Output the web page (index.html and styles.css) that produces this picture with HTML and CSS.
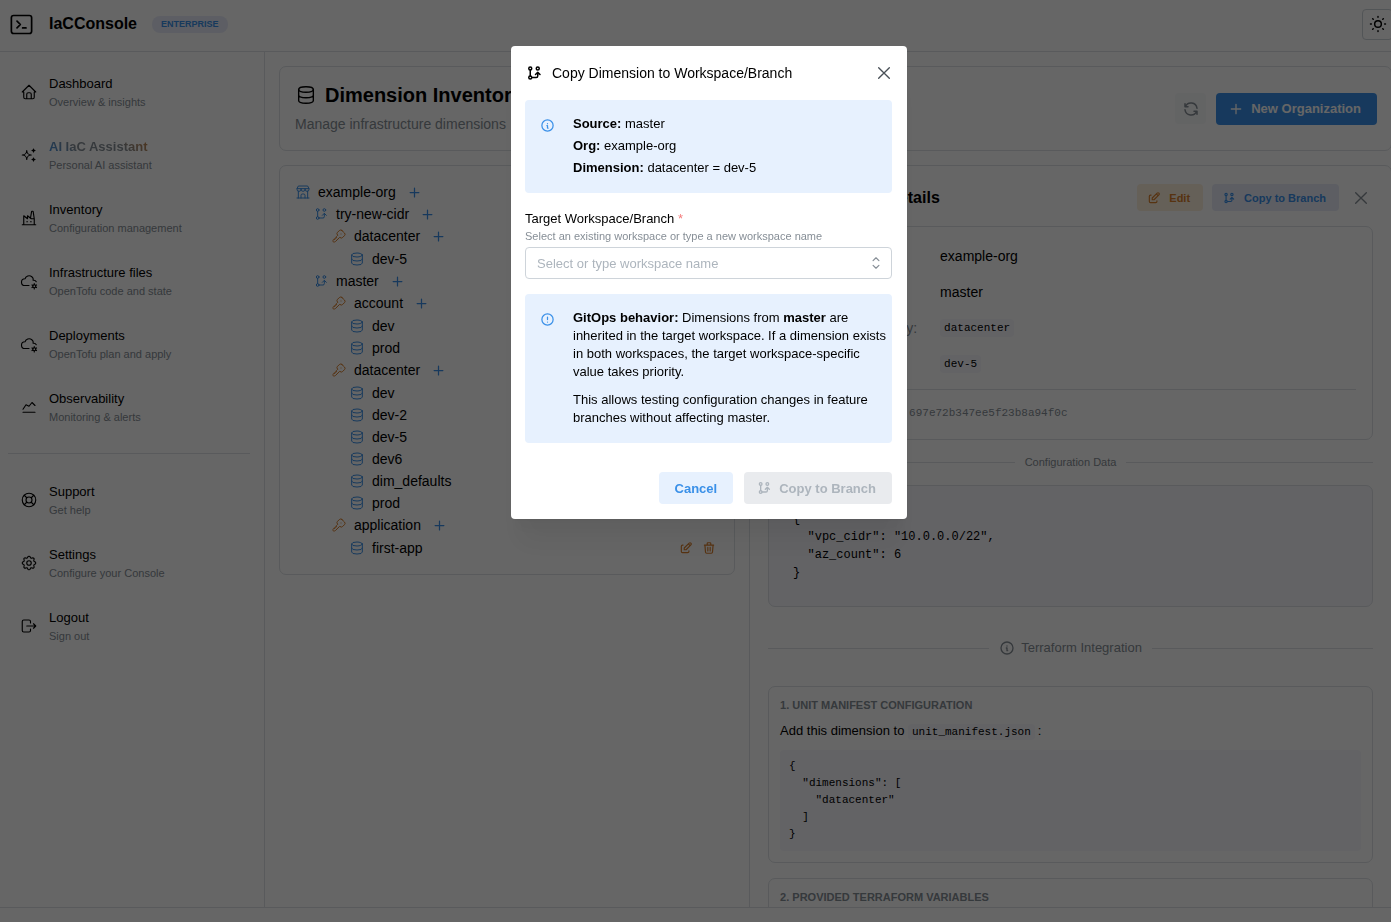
FILE: index.html
```
<!DOCTYPE html>
<html lang="en">
<head>
<meta charset="UTF-8">
<meta name="viewport" content="width=device-width, initial-scale=1">
<title>IaCConsole - Dimension Inventory</title>
<link rel="stylesheet" href="styles.css">
</head>
<body>
<svg class="sprite" aria-hidden="true">
	<symbol id="i-terminal" viewBox="0 0 24 24"><rect x="3" y="4" width="18" height="16" rx="2"/><path d="M8 9l3 3l-3 3M13 15h3"/></symbol>
	<symbol id="i-home" viewBox="0 0 24 24"><path d="M5 12H3l9-9l9 9h-2M5 12v7a2 2 0 0 0 2 2h10a2 2 0 0 0 2-2v-7M9 21v-6a2 2 0 0 1 2-2h2a2 2 0 0 1 2 2v6"/></symbol>
	<symbol id="i-sparkles" viewBox="0 0 24 24"><path d="M16 18a2 2 0 0 1 2 2a2 2 0 0 1 2-2a2 2 0 0 1-2-2a2 2 0 0 1-2 2zM16 6a2 2 0 0 1 2 2a2 2 0 0 1 2-2a2 2 0 0 1-2-2a2 2 0 0 1-2 2zM9 18a6 6 0 0 1 6-6a6 6 0 0 1-6-6a6 6 0 0 1-6 6a6 6 0 0 1 6 6z"/></symbol>
	<symbol id="i-factory" viewBox="0 0 24 24"><path d="M3 21h18M5 21V9l5 4V9l5 4h4M19 21v-8l-1.436-9.574A.5.5 0 0 0 17.069 3h-1.145a.5.5 0 0 0-.494.418L14 12M9 17h1M14 17h1"/></symbol>
	<symbol id="i-cloud" viewBox="0 0 24 24"><path d="M12 18H6.657C4.085 17.996 2 15.989 2 13.513c0-2.475 2.085-4.482 4.657-4.482c.393-1.762 1.794-3.2 3.675-3.773c1.88-.572 3.956-.193 5.444 1c1.488 1.19 2.162 3.007 1.77 4.769h.99c1.37 0 2.556.8 3.117 1.964"/><circle cx="19" cy="19" r="2"/><path d="M19 15.5V17M19 21v1.5M22.032 17.25l-1.299.75M17.27 20l-1.3.75M15.97 17.25l1.3.75M20.733 20l1.3.75"/></symbol>
	<symbol id="i-chart" viewBox="0 0 24 24"><path d="M4 19h16M4 15l4-6l4 2l4-5l4 4"/></symbol>
	<symbol id="i-lifebuoy" viewBox="0 0 24 24"><circle cx="12" cy="12" r="4"/><circle cx="12" cy="12" r="9"/><path d="M15 15l3.35 3.35M9 15l-3.35 3.35M5.65 5.65L9 9M18.35 5.65L15 9"/></symbol>
	<symbol id="i-settings" viewBox="0 0 24 24"><path d="M10.325 4.317c.426-1.756 2.924-1.756 3.35 0a1.724 1.724 0 0 0 2.573 1.066c1.543-.94 3.31.826 2.37 2.37a1.724 1.724 0 0 0 1.065 2.572c1.756.426 1.756 2.924 0 3.35a1.724 1.724 0 0 0-1.066 2.573c.94 1.543-.826 3.31-2.37 2.37a1.724 1.724 0 0 0-2.572 1.065c-.426 1.756-2.924 1.756-3.35 0a1.724 1.724 0 0 0-2.573-1.066c-1.543.94-3.31-.826-2.37-2.37a1.724 1.724 0 0 0-1.065-2.572c-1.756-.426-1.756-2.924 0-3.35a1.724 1.724 0 0 0 1.066-2.573c-.94-1.543.826-3.31 2.37-2.37c1 .608 2.296.07 2.572-1.065z"/><circle cx="12" cy="12" r="3"/></symbol>
	<symbol id="i-logout" viewBox="0 0 24 24"><path d="M14 8V6a2 2 0 0 0-2-2H5a2 2 0 0 0-2 2v12a2 2 0 0 0 2 2h7a2 2 0 0 0 2-2v-2M9 12h12l-3-3M18 15l3-3"/></symbol>
	<symbol id="i-database" viewBox="0 0 24 24"><ellipse cx="12" cy="6" rx="8" ry="3"/><path d="M4 6v6a8 3 0 0 0 16 0V6M4 12v6a8 3 0 0 0 16 0v-6"/></symbol>
	<symbol id="i-store" viewBox="0 0 24 24"><path d="M3 21h18M3 7v1a3 3 0 0 0 6 0V7M9 8a3 3 0 0 0 6 0V7M15 8a3 3 0 0 0 6 0V7H3l2-4h14l2 4M5 21V10.85M19 21V10.85M9 21v-4a2 2 0 0 1 2-2h2a2 2 0 0 1 2 2v4"/></symbol>
	<symbol id="i-branch" viewBox="0 0 24 24"><circle cx="7" cy="18" r="2"/><circle cx="7" cy="6" r="2"/><circle cx="17" cy="6" r="2"/><path d="M7 8v8M9 18h6a2 2 0 0 0 2-2v-5M14 14l3-3l3 3"/></symbol>
	<symbol id="i-key" viewBox="0 0 24 24"><path d="M16.555 3.843l3.602 3.602a2.877 2.877 0 0 1 0 4.069l-2.643 2.643a2.877 2.877 0 0 1-4.069 0l-.301-.301l-6.558 6.558a2 2 0 0 1-1.239.578L5.172 21H4a1 1 0 0 1-.993-.883L3 20v-1.172a2 2 0 0 1 .467-1.284l.119-.13L4 17h2v-2h2v-2l2.144-2.144l-.301-.301a2.877 2.877 0 0 1 0-4.069l2.643-2.643a2.877 2.877 0 0 1 4.069 0zM15 9h.01"/></symbol>
	<symbol id="i-plus" viewBox="0 0 24 24"><path d="M12 5v14M5 12h14"/></symbol>
	<symbol id="i-edit" viewBox="0 0 24 24"><path d="M7 7H6a2 2 0 0 0-2 2v9a2 2 0 0 0 2 2h9a2 2 0 0 0 2-2v-1M20.385 6.585a2.1 2.1 0 0 0-2.97-2.97L9 12v3h3zM16 5l3 3"/></symbol>
	<symbol id="i-trash" viewBox="0 0 24 24"><path d="M4 7h16M10 11v6M14 11v6M5 7l1 12a2 2 0 0 0 2 2h8a2 2 0 0 0 2-2l1-12M9 7V4a1 1 0 0 1 1-1h4a1 1 0 0 1 1 1v3"/></symbol>
	<symbol id="i-sun" viewBox="0 0 24 24"><circle cx="12" cy="12" r="4"/><path d="M3 12h1M12 3v1M20 12h1M12 20v1M5.6 5.6l.7.7M18.4 5.6l-.7.7M17.7 17.7l.7.7M6.3 17.7l-.7.7"/></symbol>
	<symbol id="i-refresh" viewBox="0 0 24 24"><path d="M20 11A8.1 8.1 0 0 0 4.5 9M4 5v4h4M4 13a8.1 8.1 0 0 0 15.5 2M20 19v-4h-4"/></symbol>
	<symbol id="i-info" viewBox="0 0 24 24"><circle cx="12" cy="12" r="9"/><path d="M12 9h.01M11 12h1v4h1"/></symbol>
	<symbol id="i-alert" viewBox="0 0 24 24"><circle cx="12" cy="12" r="9"/><path d="M12 8v4M12 16h.01"/></symbol>
	<symbol id="i-close" viewBox="0 0 24 24"><path d="M4 4l16 16M20 4L4 20"/></symbol>
	<symbol id="i-selector" viewBox="0 0 24 24"><path d="M7 8l5-5l5 5M17 16l-5 5l-5-5"/></symbol>
</svg>

<div class="app">
	<header class="header">
		<svg class="icon logo"><use href="#i-terminal"/></svg>
		<span class="brand">IaCConsole</span>
		<span class="badge">ENTERPRISE</span>
		<button type="button" class="theme-btn" aria-label="Toggle color scheme"><svg class="icon"><use href="#i-sun"/></svg></button>
	</header>

	<div class="shell">
		<nav class="navbar">
			<a class="nav-link" href="#"><svg class="icon"><use href="#i-home"/></svg><span class="nav-body"><span class="nav-label">Dashboard</span><span class="nav-desc">Overview &amp; insights</span></span></a>
			<a class="nav-link" href="#"><svg class="icon"><use href="#i-sparkles"/></svg><span class="nav-body"><span class="nav-label ai">AI IaC Assistant</span><span class="nav-desc">Personal AI assistant</span></span></a>
			<a class="nav-link" href="#"><svg class="icon"><use href="#i-factory"/></svg><span class="nav-body"><span class="nav-label">Inventory</span><span class="nav-desc">Configuration management</span></span></a>
			<a class="nav-link" href="#"><svg class="icon"><use href="#i-cloud"/></svg><span class="nav-body"><span class="nav-label">Infrastructure files</span><span class="nav-desc">OpenTofu code and state</span></span></a>
			<a class="nav-link" href="#"><svg class="icon"><use href="#i-cloud"/></svg><span class="nav-body"><span class="nav-label">Deployments</span><span class="nav-desc">OpenTofu plan and apply</span></span></a>
			<a class="nav-link" href="#"><svg class="icon"><use href="#i-chart"/></svg><span class="nav-body"><span class="nav-label">Observability</span><span class="nav-desc">Monitoring &amp; alerts</span></span></a>
			<hr class="nav-divider">
			<a class="nav-link" href="#"><svg class="icon"><use href="#i-lifebuoy"/></svg><span class="nav-body"><span class="nav-label">Support</span><span class="nav-desc">Get help</span></span></a>
			<a class="nav-link" href="#"><svg class="icon"><use href="#i-settings"/></svg><span class="nav-body"><span class="nav-label">Settings</span><span class="nav-desc">Configure your Console</span></span></a>
			<a class="nav-link" href="#"><svg class="icon"><use href="#i-logout"/></svg><span class="nav-body"><span class="nav-label">Logout</span><span class="nav-desc">Sign out</span></span></a>
		</nav>

		<main class="main">
			<section class="card page-head">
				<div class="page-title">
					<h1><svg class="icon"><use href="#i-database"/></svg>Dimension Inventory</h1>
					<p class="subtitle">Manage infrastructure dimensions</p>
				</div>
				<div class="actions">
					<button type="button" class="refresh-btn" aria-label="Refresh"><svg class="icon"><use href="#i-refresh"/></svg></button>
					<button type="button" class="btn btn-primary"><svg class="icon"><use href="#i-plus"/></svg>New Organization</button>
				</div>
			</section>

			<div class="columns">
				<section class="card tree-card">
					<ul class="tree">
						<li><div class="node"><svg class="icon"><use href="#i-store"/></svg>example-org<button type="button" class="add" aria-label="Add workspace"><svg class="icon"><use href="#i-plus"/></svg></button></div>
							<ul>
								<li><div class="node branch"><svg class="icon"><use href="#i-branch"/></svg>try-new-cidr<button type="button" class="add" aria-label="Add key"><svg class="icon"><use href="#i-plus"/></svg></button></div>
									<ul>
										<li><div class="node key"><svg class="icon"><use href="#i-key"/></svg>datacenter<button type="button" class="add" aria-label="Add value"><svg class="icon"><use href="#i-plus"/></svg></button></div>
											<ul class="values">
												<li class="node"><svg class="icon"><use href="#i-database"/></svg>dev-5</li>
											</ul>
										</li>
									</ul>
								</li>
								<li><div class="node branch"><svg class="icon"><use href="#i-branch"/></svg>master<button type="button" class="add" aria-label="Add key"><svg class="icon"><use href="#i-plus"/></svg></button></div>
									<ul>
										<li><div class="node key"><svg class="icon"><use href="#i-key"/></svg>account<button type="button" class="add" aria-label="Add value"><svg class="icon"><use href="#i-plus"/></svg></button></div>
											<ul class="values">
												<li class="node"><svg class="icon"><use href="#i-database"/></svg>dev</li>
												<li class="node"><svg class="icon"><use href="#i-database"/></svg>prod</li>
											</ul>
										</li>
										<li><div class="node key"><svg class="icon"><use href="#i-key"/></svg>datacenter<button type="button" class="add" aria-label="Add value"><svg class="icon"><use href="#i-plus"/></svg></button></div>
											<ul class="values">
												<li class="node"><svg class="icon"><use href="#i-database"/></svg>dev</li>
												<li class="node"><svg class="icon"><use href="#i-database"/></svg>dev-2</li>
												<li class="node"><svg class="icon"><use href="#i-database"/></svg>dev-5</li>
												<li class="node"><svg class="icon"><use href="#i-database"/></svg>dev6</li>
												<li class="node"><svg class="icon"><use href="#i-database"/></svg>dim_defaults</li>
												<li class="node"><svg class="icon"><use href="#i-database"/></svg>prod</li>
											</ul>
										</li>
										<li><div class="node key"><svg class="icon"><use href="#i-key"/></svg>application<button type="button" class="add" aria-label="Add value"><svg class="icon"><use href="#i-plus"/></svg></button></div>
											<ul class="values">
												<li class="node"><svg class="icon"><use href="#i-database"/></svg>first-app
													<span class="node-actions">
														<button type="button" aria-label="Edit first-app"><svg class="icon"><use href="#i-edit"/></svg></button>
														<button type="button" aria-label="Delete first-app"><svg class="icon"><use href="#i-trash"/></svg></button>
													</span>
												</li>
											</ul>
										</li>
									</ul>
								</li>
							</ul>
						</li>
					</ul>
				</section>

				<section class="card detail-card">
					<div class="detail-head">
						<h2><svg class="icon"><use href="#i-database"/></svg>Dimension Details</h2>
						<button type="button" class="btn btn-xs btn-orange"><svg class="icon"><use href="#i-edit"/></svg>Edit</button>
						<button type="button" class="btn btn-xs btn-light"><svg class="icon"><use href="#i-branch"/></svg>Copy to Branch</button>
						<button type="button" class="close-btn" aria-label="Close details"><svg class="icon"><use href="#i-close"/></svg></button>
					</div>

					<div class="box info-box">
						<dl class="info">
							<dt><svg class="icon"><use href="#i-store"/></svg>Organization:</dt><dd>example-org</dd>
							<dt><svg class="icon"><use href="#i-branch"/></svg>Workspace:</dt><dd>master</dd>
							<dt><svg class="icon"><use href="#i-key"/></svg>Dimension Key:</dt><dd><code>datacenter</code></dd>
							<dt><svg class="icon"><use href="#i-database"/></svg>Value:</dt><dd><code>dev-5</code></dd>
						</dl>
						<p class="dim-id"><span>Dimension ID:</span>697e72b347ee5f23b8a94f0c</p>
					</div>

					<div class="divider">Configuration Data</div>
<pre class="box json">{
  "vpc_cidr": "10.0.0.0/22",
  "az_count": 6
}</pre>

					<div class="divider divider-lg"><span><svg class="icon"><use href="#i-info"/></svg>Terraform Integration</span></div>

					<div class="box step">
						<h3>1. UNIT MANIFEST CONFIGURATION</h3>
						<p>Add this dimension to <code>unit_manifest.json</code>:</p>
<pre class="snippet">{
  "dimensions": [
    "datacenter"
  ]
}</pre>
					</div>
					<div class="box step">
						<h3>2. PROVIDED TERRAFORM VARIABLES</h3>
					</div>
				</section>
			</div>
		</main>
	</div>
	<footer class="footer"></footer>
</div>

<div class="overlay">
	<div class="modal" role="dialog" aria-modal="true" aria-labelledby="modal-title">
		<div class="modal-head">
			<svg class="icon"><use href="#i-branch"/></svg>
			<h2 id="modal-title">Copy Dimension to Workspace/Branch</h2>
			<button type="button" class="close-btn" aria-label="Close"><svg class="icon"><use href="#i-close"/></svg></button>
		</div>
		<div class="alert alert-source">
			<svg class="icon"><use href="#i-info"/></svg>
			<div>
				<p><b>Source:</b> master</p>
				<p><b>Org:</b> example-org</p>
				<p><b>Dimension:</b> datacenter = dev-5</p>
			</div>
		</div>
		<div class="field">
			<label for="target">Target Workspace/Branch <span class="required">*</span></label>
			<p class="field-desc" id="target-desc">Select an existing workspace or type a new workspace name</p>
			<div class="select">
				<input type="text" id="target" placeholder="Select or type workspace name" aria-describedby="target-desc">
				<svg class="icon"><use href="#i-selector"/></svg>
			</div>
		</div>
		<div class="alert">
			<svg class="icon"><use href="#i-alert"/></svg>
			<div>
				<p><b>GitOps behavior:</b> Dimensions from <b>master</b> are inherited in the target workspace. If a dimension exists in both workspaces, the target workspace-specific value takes priority.</p>
				<p>This allows testing configuration changes in feature branches without affecting master.</p>
			</div>
		</div>
		<div class="modal-foot">
			<button type="button" class="btn btn-light">Cancel</button>
			<button type="button" class="btn btn-disabled" disabled><svg class="icon"><use href="#i-branch"/></svg>Copy to Branch</button>
		</div>
	</div>
</div>
</body>
</html>
```

FILE: styles.css
```
:root{
	--blue:#3a90e8;
	--orange:#d97f2c;
	--dimmed:#868e96;
	--border:#dee2e6;
	--tint:#f7f7fd;
	--mono:"Liberation Mono", monospace;
}
*{
	box-sizing:border-box;
}
body{
	margin:0;
	font-family:"Liberation Sans", Arial, sans-serif;
	font-size:13px;
	line-height:18px;
	color:#000;
	background:#fff;
}
h1, h2, h3, p, ul, dl, dd, pre{
	margin:0;
	padding:0;
}
ul{
	list-style:none;
}
button{
	font-family:inherit;
	padding:0;
	border:0;
	background:none;
	color:inherit;
	cursor:pointer;
}
a{
	color:inherit;
	text-decoration:none;
}
.sprite{
	display:none;
}
.icon{
	width:16px;
	height:16px;
	flex:none;
	fill:none;
	stroke:currentColor;
	stroke-width:2;
	stroke-linecap:round;
	stroke-linejoin:round;
}

/* shell */
.app{
	display:flex;
	flex-direction:column;
	height:100vh;
	overflow:hidden;
}
.header{
	display:flex;
	align-items:center;
	flex:none;
	height:52px;
	padding:0 0 3px 8px;
	border-bottom:1px solid var(--border);
}
.logo{
	width:27px;
	height:27px;
	stroke-width:1.5;
}
.brand{
	margin-left:14px;
	font-size:16px;
	font-weight:bold;
}
.badge{
	margin-left:15px;
	padding:0 9px;
	border-radius:8px;
	font-size:9px;
	line-height:17px;
	font-weight:bold;
	color:var(--blue);
	background:#e9ecf9;
}
.theme-btn{
	display:flex;
	align-items:center;
	justify-content:center;
	width:31px;
	height:31px;
	margin:0 -2px 0 auto;
	border:1px solid #ced4da;
	border-radius:4px;
}
.theme-btn .icon{
	width:20px;
	height:20px;
	stroke-width:1.75;
}
.shell{
	display:flex;
	flex:1;
	min-height:0;
}
.footer{
	flex:none;
	height:15px;
	border-top:1px solid var(--border);
}

/* navbar */
.navbar{
	width:265px;
	flex:none;
	padding:10px 14px 0 8px;
	border-right:1px solid var(--border);
}
.nav-link{
	display:flex;
	align-items:center;
	gap:11px;
	height:63px;
	padding-left:12px;
}
.nav-link .icon{
	width:18px;
	height:18px;
	margin-bottom:3px;
	stroke-width:1.5;
}
.nav-label,
.nav-desc{
	display:block;
}
.nav-desc{
	font-size:11px;
	line-height:19px;
	color:var(--dimmed);
}
.nav-label.ai{
	font-weight:bold;
	width:fit-content;
	color:transparent;
	background:linear-gradient(45deg, #3a90e8, #868e96 30%, #868e96 70%, #c98544);
	-webkit-background-clip:text;
	background-clip:text;
}
.nav-divider{
	height:1px;
	margin:13px 0 16px;
	border:0;
	background:var(--border);
}

/* page */
.main{
	flex:1;
	min-width:0;
	margin-right:-1px;
	padding:14px 0 0 14px;
	overflow:hidden;
}
.card,
.box{
	border:1px solid var(--border);
	border-radius:7px;
}
.page-head{
	display:flex;
	align-items:center;
	justify-content:space-between;
	height:85px;
	padding:0 14px 0 15px;
}
.page-title{
	padding-bottom:2px;
}
.page-head h1{
	display:flex;
	align-items:center;
	gap:8px;
	font-size:20px;
	line-height:28px;
}
.page-head h1 .icon{
	width:22px;
	height:22px;
	stroke-width:1.5;
}
.subtitle{
	margin-top:4px;
	font-size:14px;
	line-height:22px;
	color:var(--dimmed);
}
.actions{
	display:flex;
	align-items:center;
	gap:10px;
}
.refresh-btn{
	display:flex;
	align-items:center;
	justify-content:center;
	width:31px;
	height:31px;
	border-radius:4px;
	color:var(--dimmed);
	background:#f8f9fa;
}
.refresh-btn .icon{
	width:18px;
	height:18px;
}
.btn{
	display:inline-flex;
	align-items:center;
	justify-content:center;
	gap:7px;
	height:32px;
	padding:0 16px 0 12px;
	border-radius:4px;
	font-size:13px;
	font-weight:bold;
	white-space:nowrap;
}
.btn-primary{
	color:#fff;
	background:var(--blue);
}
.btn-light{
	color:var(--blue);
	background:#e7f1fe;
}
.btn-orange{
	color:var(--orange);
	background:#fcf0dc;
}
.btn-xs{
	gap:8px;
	height:27px;
	padding:0 13px 0 10px;
	font-size:11px;
}
.btn-xs .icon{
	width:14px;
	height:14px;
}
.columns{
	display:grid;
	grid-template-columns:41.5fr 58.5fr;
	align-items:start;
	gap:14px;
	margin-top:14px;
}
.columns > *{
	min-width:0;
}

/* dimension tree */
.tree-card{
	padding:15px 14px 15px 15px;
}
.tree{
	font-size:14px;
	line-height:22px;
}
.tree ul{
	padding-left:18px;
}
.tree .values{
	padding-top:1px;
}
.node{
	display:flex;
	align-items:center;
	gap:7px;
	color:#000;
}
.node > .icon{
	color:var(--blue);
	stroke-width:1.5;
}
.node.key > .icon{
	color:var(--orange);
}
.add{
	display:flex;
	margin-left:4px;
	color:var(--blue);
}
.add .icon{
	width:15px;
	height:15px;
	stroke-width:2;
}
.node-actions{
	display:flex;
	gap:9px;
	margin-left:auto;
	padding-right:4px;
	color:var(--orange);
}
.node-actions button{
	display:flex;
}
.node-actions .icon{
	width:14px;
	height:14px;
}

/* details */
.detail-card{
	padding:18px;
}
.detail-head{
	display:flex;
	align-items:center;
	gap:9px;
}
.detail-head h2{
	display:flex;
	align-items:center;
	gap:13px;
	margin-right:auto;
	font-size:16px;
}
.detail-head h2 .icon{
	width:20px;
	height:20px;
}
.detail-head .btn-light{
	background:#e8ebf8;
}
.close-btn{
	display:flex;
	color:#495057;
}
.detail-head .close-btn{
	margin:0 4px 0 5px;
	color:var(--dimmed);
}
.info-box{
	margin-top:15px;
	padding:18px 16px 17px;
}
.info{
	display:grid;
	grid-template-columns:155px 1fr;
	row-gap:14px;
	padding-bottom:14px;
	border-bottom:1px solid var(--border);
	font-size:14px;
	line-height:22px;
}
.info dt{
	display:flex;
	align-items:center;
	gap:18px;
	color:var(--dimmed);
}
.info dd{
	display:flex;
	align-items:center;
	height:22px;
}
code{
	padding:2px 4px;
	border-radius:4px;
	font-family:var(--mono);
	font-size:11px;
	line-height:14px;
	background:var(--tint);
}
.dim-id{
	display:flex;
	align-items:center;
	margin-top:14px;
	font-family:var(--mono);
	font-size:11px;
	color:var(--dimmed);
}
.dim-id span{
	width:124px;
}
.divider{
	display:flex;
	align-items:center;
	gap:10px;
	margin:13px 0 14px;
	font-size:11px;
	color:var(--dimmed);
}
.divider::before,
.divider::after{
	content:"";
	flex:1;
	height:1px;
	background:var(--border);
}
.divider span{
	display:flex;
	align-items:center;
	gap:6px;
}
.divider-lg{
	margin:32px 0 29px;
	font-size:13px;
}
.json{
	padding:24px;
	font-family:var(--mono);
	font-size:12px;
	line-height:18px;
	background:var(--tint);
}
.step{
	margin-bottom:15px;
	padding:9px 11px 11px;
}
.step h3{
	font-size:11px;
	line-height:18px;
	color:var(--dimmed);
}
.step p{
	margin-top:8px;
}
.step code{
	margin-right:3px;
}
.snippet{
	margin-top:10px;
	padding:8px 9px;
	border-radius:4px;
	font-family:var(--mono);
	font-size:11px;
	line-height:17px;
	background:var(--tint);
}

/* modal */
.overlay{
	position:fixed;
	top:0;
	right:0;
	bottom:0;
	left:0;
	display:flex;
	align-items:flex-start;
	justify-content:center;
	padding:5vh 0 0 27px;
	background:rgba(0,0,0,.6);
}
.modal{
	width:396px;
	padding:0 15px 15px 14px;
	border-radius:4px;
	background:#fff;
	box-shadow:0 1px 3px rgba(0,0,0,.05), 0 32px 25px -5px rgba(0,0,0,.05), 0 15px 15px -5px rgba(0,0,0,.04);
}
.modal-head{
	display:flex;
	align-items:center;
	height:54px;
}
.modal-head > .icon{
	width:18px;
	height:18px;
}
.modal-head h2{
	margin:0 auto 0 9px;
	font-size:14px;
	font-weight:normal;
}
.modal-head .close-btn .icon,
.detail-head .close-btn .icon{
	width:16px;
	height:16px;
	stroke-width:2;
}
.alert{
	display:flex;
	gap:18px;
	padding:15px 4px 16px 15px;
	border-radius:4px;
	background:#e7f1fe;
}
.alert > .icon{
	width:15px;
	height:15px;
	margin-top:3px;
	color:var(--blue);
}
.alert p + p{
	margin-top:10px;
}
.alert-source p + p{
	margin-top:4px;
}
.field{
	margin:17px 0 15px;
}
.field label{
	display:block;
}
.required{
	color:#f47c7c;
}
.field-desc{
	font-size:11px;
	line-height:17px;
	color:var(--dimmed);
}
.select{
	display:flex;
	align-items:center;
	height:32px;
	margin-top:2px;
	padding:0 8px 0 11px;
	border:1px solid #ced4da;
	border-radius:4px;
}
.select input{
	flex:1;
	min-width:0;
	padding:0;
	border:0;
	outline:0;
	font-family:inherit;
	font-size:13px;
	background:none;
}
.select input::placeholder{
	color:#adb5bd;
}
.select .icon{
	width:14px;
	height:14px;
	color:var(--dimmed);
}
.modal-foot{
	display:flex;
	justify-content:flex-end;
	gap:11px;
	margin-top:29px;
}
.modal-foot .btn-light{
	padding:0 16px;
}
.btn-disabled{
	color:#adb5bd;
	background:#e9ebee;
	cursor:not-allowed;
}
```
